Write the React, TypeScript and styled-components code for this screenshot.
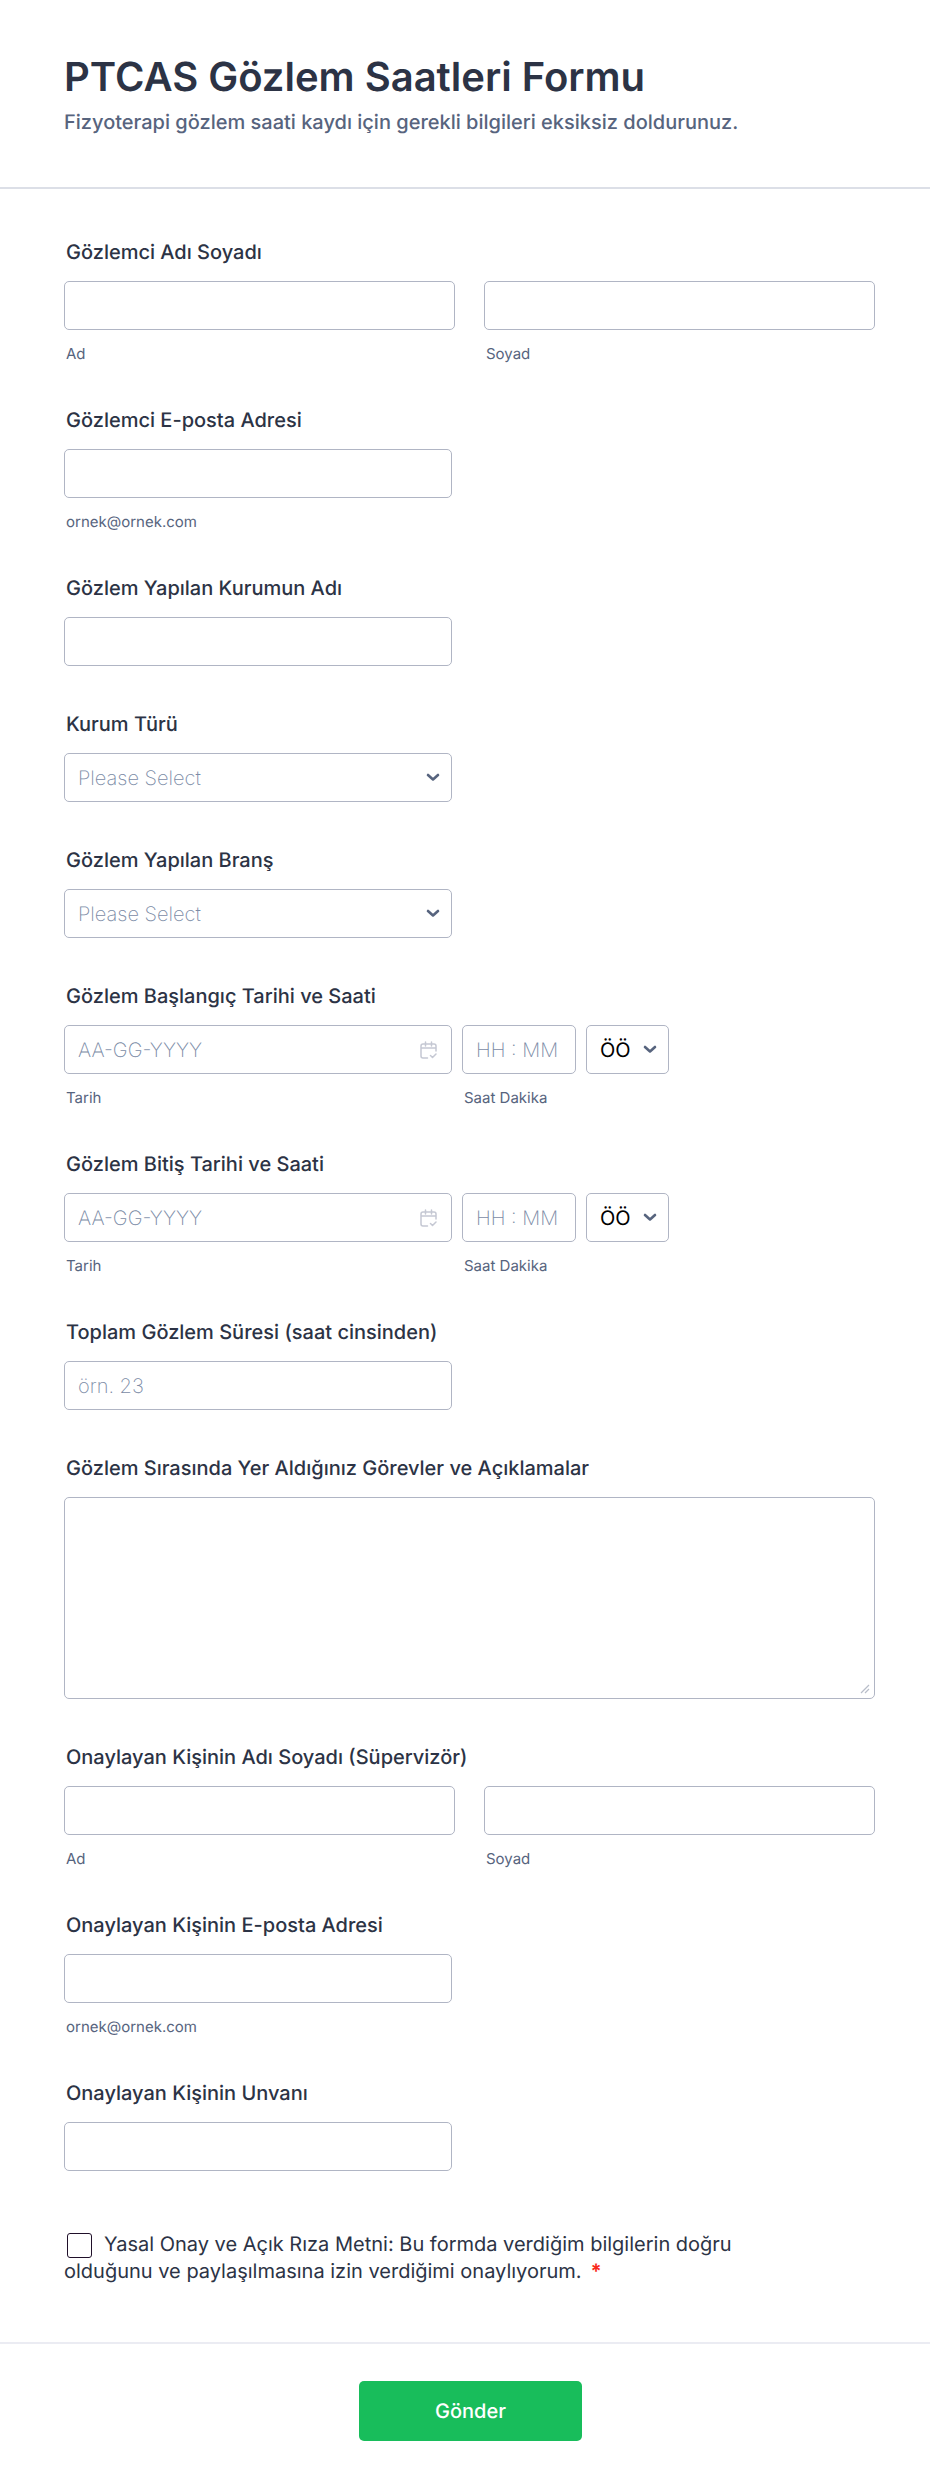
import React, { useId, useState } from 'react';
import styled, { createGlobalStyle } from 'styled-components';

const GlobalStyle = createGlobalStyle`
  *, *::before, *::after { box-sizing: border-box; }
  body {
    margin: 0;
    background: #fff;
    color: #2c3345;
    font-family: Inter, "Liberation Sans", sans-serif;
    text-rendering: geometricPrecision;
  }
`;

const Header = styled.header`
  padding: 53px 55px 53px 64px;
  border-bottom: 2px solid #dcdfe7;
`;

const Title = styled.h1`
  margin: 0 0 9px;
  font-size: 40px;
  line-height: 48px;
  font-weight: 600;
`;

const Subtitle = styled.p`
  margin: 0;
  font-size: 20px;
  line-height: 24px;
  color: #57647e;
  font-weight: 450;
`;

const Questions = styled.div`
  display: flex;
  flex-direction: column;
  gap: 46px;
  padding: 51px 55px 0 64px;
`;

const Field = styled.div`
  display: flex;
  flex-direction: column;
  align-items: flex-start;
`;

const Group = styled.fieldset`
  border: 0;
  margin: 0;
  padding: 0;
  min-width: 0;
`;

const labelStyle = `
  display: block;
  margin: 0 0 17px;
  padding: 0 2px;
  font-size: 20px;
  line-height: 24px;
  font-weight: 450;
`;

const Label = styled.label`${labelStyle}`;
const Legend = styled.legend`${labelStyle}`;

const SubLabel = styled.label`
  display: block;
  margin-top: 15px;
  padding: 0 2px;
  font-size: 15px;
  line-height: 17px;
  color: #57647e;
`;

const controlStyle = `
  display: block;
  width: 100%;
  height: 49px;
  padding: 0 13px;
  border: 1px solid #b0b5c4;
  border-radius: 5px;
  background: #fff;
  font-family: inherit;
  font-size: 20px;
  color: #000;
  text-rendering: inherit;
`;

const TextInput = styled.input`
  ${controlStyle}
  &::placeholder { color: #7b8ba6; font-weight: 250; opacity: 1; }
`;

const Select = styled.select<{ $empty?: boolean }>`
  ${controlStyle}
  appearance: none;
  color: ${(p) => (p.$empty ? '#7b8ba6' : '#000')};
  font-weight: ${(p) => (p.$empty ? 250 : 400)};
`;

const ControlWrap = styled.div<{ $width: number }>`
  width: ${(p) => p.$width}px;
  max-width: 100%;
`;

const ControlBox = styled.div`
  position: relative;
  width: 100%;
`;

const Adornment = styled.svg<{ $right: number }>`
  position: absolute;
  right: ${(p) => p.$right}px;
  top: 0;
  bottom: 0;
  margin: auto 0;
  fill: none;
  stroke-linecap: round;
  stroke-linejoin: round;
  pointer-events: none;
`;

const NameGrid = styled.div`
  display: grid;
  grid-template-columns: 1fr 1fr;
  gap: 29px;
`;

const DateRow = styled.div`
  display: flex;
  flex-wrap: wrap;
  gap: 10px;
`;

const TextArea = styled.textarea`
  ${controlStyle}
  height: 202px;
  padding: 13px;
  resize: none;
`;

const Grip = styled.svg`
  position: absolute;
  right: 5px;
  bottom: 5px;
  fill: none;
  stroke: #b8bdc9;
  stroke-width: 1.2;
  pointer-events: none;
`;

const Consent = styled.div`
  max-width: 680px;
  margin-top: 14px;
  font-size: 20px;
  line-height: 27px;
  color: #2c3345;
`;

const Checkbox = styled.input`
  appearance: none;
  width: 25px;
  height: 25px;
  margin: 0 12px 0 3px;
  border: 1px solid #20102a;
  border-radius: 3px;
  background: #fff;
  vertical-align: middle;
  &:checked { background: #18bd5b; }
`;

const Required = styled.span`
  margin-left: 9px;
  color: #f92a1c;
  font-weight: 700;
`;

const Footer = styled.footer`
  display: flex;
  justify-content: center;
  margin-top: 57px;
  padding: 37px 53px 49px 64px;
  border-top: 2px solid #ebecf3;
`;

const Submit = styled.button`
  width: 223px;
  height: 60px;
  border: 0;
  border-radius: 5px;
  background: #18bd5b;
  color: #fff;
  font-family: inherit;
  font-size: 20px;
  font-weight: 500;
  text-rendering: inherit;
`;

const Chevron = () => (
  <Adornment $right={12} width="14" height="9" viewBox="0 0 14 9" stroke="#57647e" strokeWidth="2.6" aria-hidden="true">
    <path d="M2 2l5 4.5L12 2" />
  </Adornment>
);

const CalendarIcon = () => (
  <Adornment $right={15} width="17" height="18" viewBox="0 0 17 18" stroke="#c5c8d3" strokeWidth="1.5" aria-hidden="true">
    <path d="M7.5 17H3a2 2 0 0 1-2-2V5a2 2 0 0 1 2-2h11a2 2 0 0 1 2 2v5M1 7h15M5.5 1v4M11.5 1v4M10.5 14.5l2 2 3.5-3.5" />
  </Adornment>
);

type FieldProps = { label: string; type?: string; hint?: string; placeholder?: string };

const TextField = ({ label, type = 'text', hint, placeholder }: FieldProps) => {
  const id = useId();
  return (
    <Field>
      <Label htmlFor={id}>{label}</Label>
      <ControlWrap $width={388}>
        <TextInput id={id} type={type} placeholder={placeholder} />
      </ControlWrap>
      {hint && <SubLabel htmlFor={id}>{hint}</SubLabel>}
    </Field>
  );
};

const NameField = ({ label }: { label: string }) => {
  const id = useId();
  return (
    <Group>
      <Legend>{label}</Legend>
      <NameGrid>
        {['Ad', 'Soyad'].map((part) => (
          <div key={part}>
            <TextInput id={id + part} type="text" />
            <SubLabel htmlFor={id + part}>{part}</SubLabel>
          </div>
        ))}
      </NameGrid>
    </Group>
  );
};

const SelectField = ({ label, options }: { label: string; options: string[] }) => {
  const id = useId();
  const [value, setValue] = useState('');
  return (
    <Field>
      <Label htmlFor={id}>{label}</Label>
      <ControlWrap $width={388}>
        <ControlBox>
          <Select id={id} $empty={!value} value={value} onChange={(e) => setValue(e.target.value)}>
            <option value="">Please Select</option>
            {options.map((o) => <option key={o}>{o}</option>)}
          </Select>
          <Chevron />
        </ControlBox>
      </ControlWrap>
    </Field>
  );
};

const DateTimeField = ({ label }: { label: string }) => {
  const id = useId();
  return (
    <Group>
      <Legend>{label}</Legend>
      <DateRow>
        <ControlWrap $width={388}>
          <ControlBox>
            <TextInput id={id + 'd'} type="text" placeholder="AA-GG-YYYY" />
            <CalendarIcon />
          </ControlBox>
          <SubLabel htmlFor={id + 'd'}>Tarih</SubLabel>
        </ControlWrap>
        <ControlWrap $width={114}>
          <TextInput id={id + 't'} type="text" placeholder="HH : MM" />
          <SubLabel htmlFor={id + 't'}>Saat Dakika</SubLabel>
        </ControlWrap>
        <ControlWrap $width={83}>
          <ControlBox>
            <Select aria-label="ÖÖ / ÖS">
              <option>ÖÖ</option>
              <option>ÖS</option>
            </Select>
            <Chevron />
          </ControlBox>
        </ControlWrap>
      </DateRow>
    </Group>
  );
};

export default function App() {
  return (
    <form onSubmit={(e) => e.preventDefault()}>
      <GlobalStyle />
      <Header>
        <Title>PTCAS Gözlem Saatleri Formu</Title>
        <Subtitle>Fizyoterapi gözlem saati kaydı için gerekli bilgileri eksiksiz doldurunuz.</Subtitle>
      </Header>
      <Questions>
        <NameField label="Gözlemci Adı Soyadı" />
        <TextField label="Gözlemci E-posta Adresi" type="email" hint="ornek@ornek.com" />
        <TextField label="Gözlem Yapılan Kurumun Adı" />
        <SelectField label="Kurum Türü" options={['Hastane', 'Klinik']} />
        <SelectField label="Gözlem Yapılan Branş" options={['Ortopedi', 'Nöroloji']} />
        <DateTimeField label="Gözlem Başlangıç Tarihi ve Saati" />
        <DateTimeField label="Gözlem Bitiş Tarihi ve Saati" />
        <TextField label="Toplam Gözlem Süresi (saat cinsinden)" placeholder="örn. 23" />
        <Field>
          <Label htmlFor="duties">Gözlem Sırasında Yer Aldığınız Görevler ve Açıklamalar</Label>
          <ControlBox>
            <TextArea id="duties" />
            <Grip width="10" height="10" viewBox="0 0 10 10" aria-hidden="true">
              <path d="M1 9 9 1M5 9l4-4" />
            </Grip>
          </ControlBox>
        </Field>
        <NameField label="Onaylayan Kişinin Adı Soyadı (Süpervizör)" />
        <TextField label="Onaylayan Kişinin E-posta Adresi" type="email" hint="ornek@ornek.com" />
        <TextField label="Onaylayan Kişinin Unvanı" />
        <Consent>
          <Checkbox id="consent" type="checkbox" />
          <label htmlFor="consent">
            Yasal Onay ve Açık Rıza Metni: Bu formda verdiğim bilgilerin doğru olduğunu ve paylaşılmasına izin
            verdiğimi onaylıyorum.
          </label>
          <Required>*</Required>
        </Consent>
      </Questions>
      <Footer>
        <Submit type="submit">Gönder</Submit>
      </Footer>
    </form>
  );
}
